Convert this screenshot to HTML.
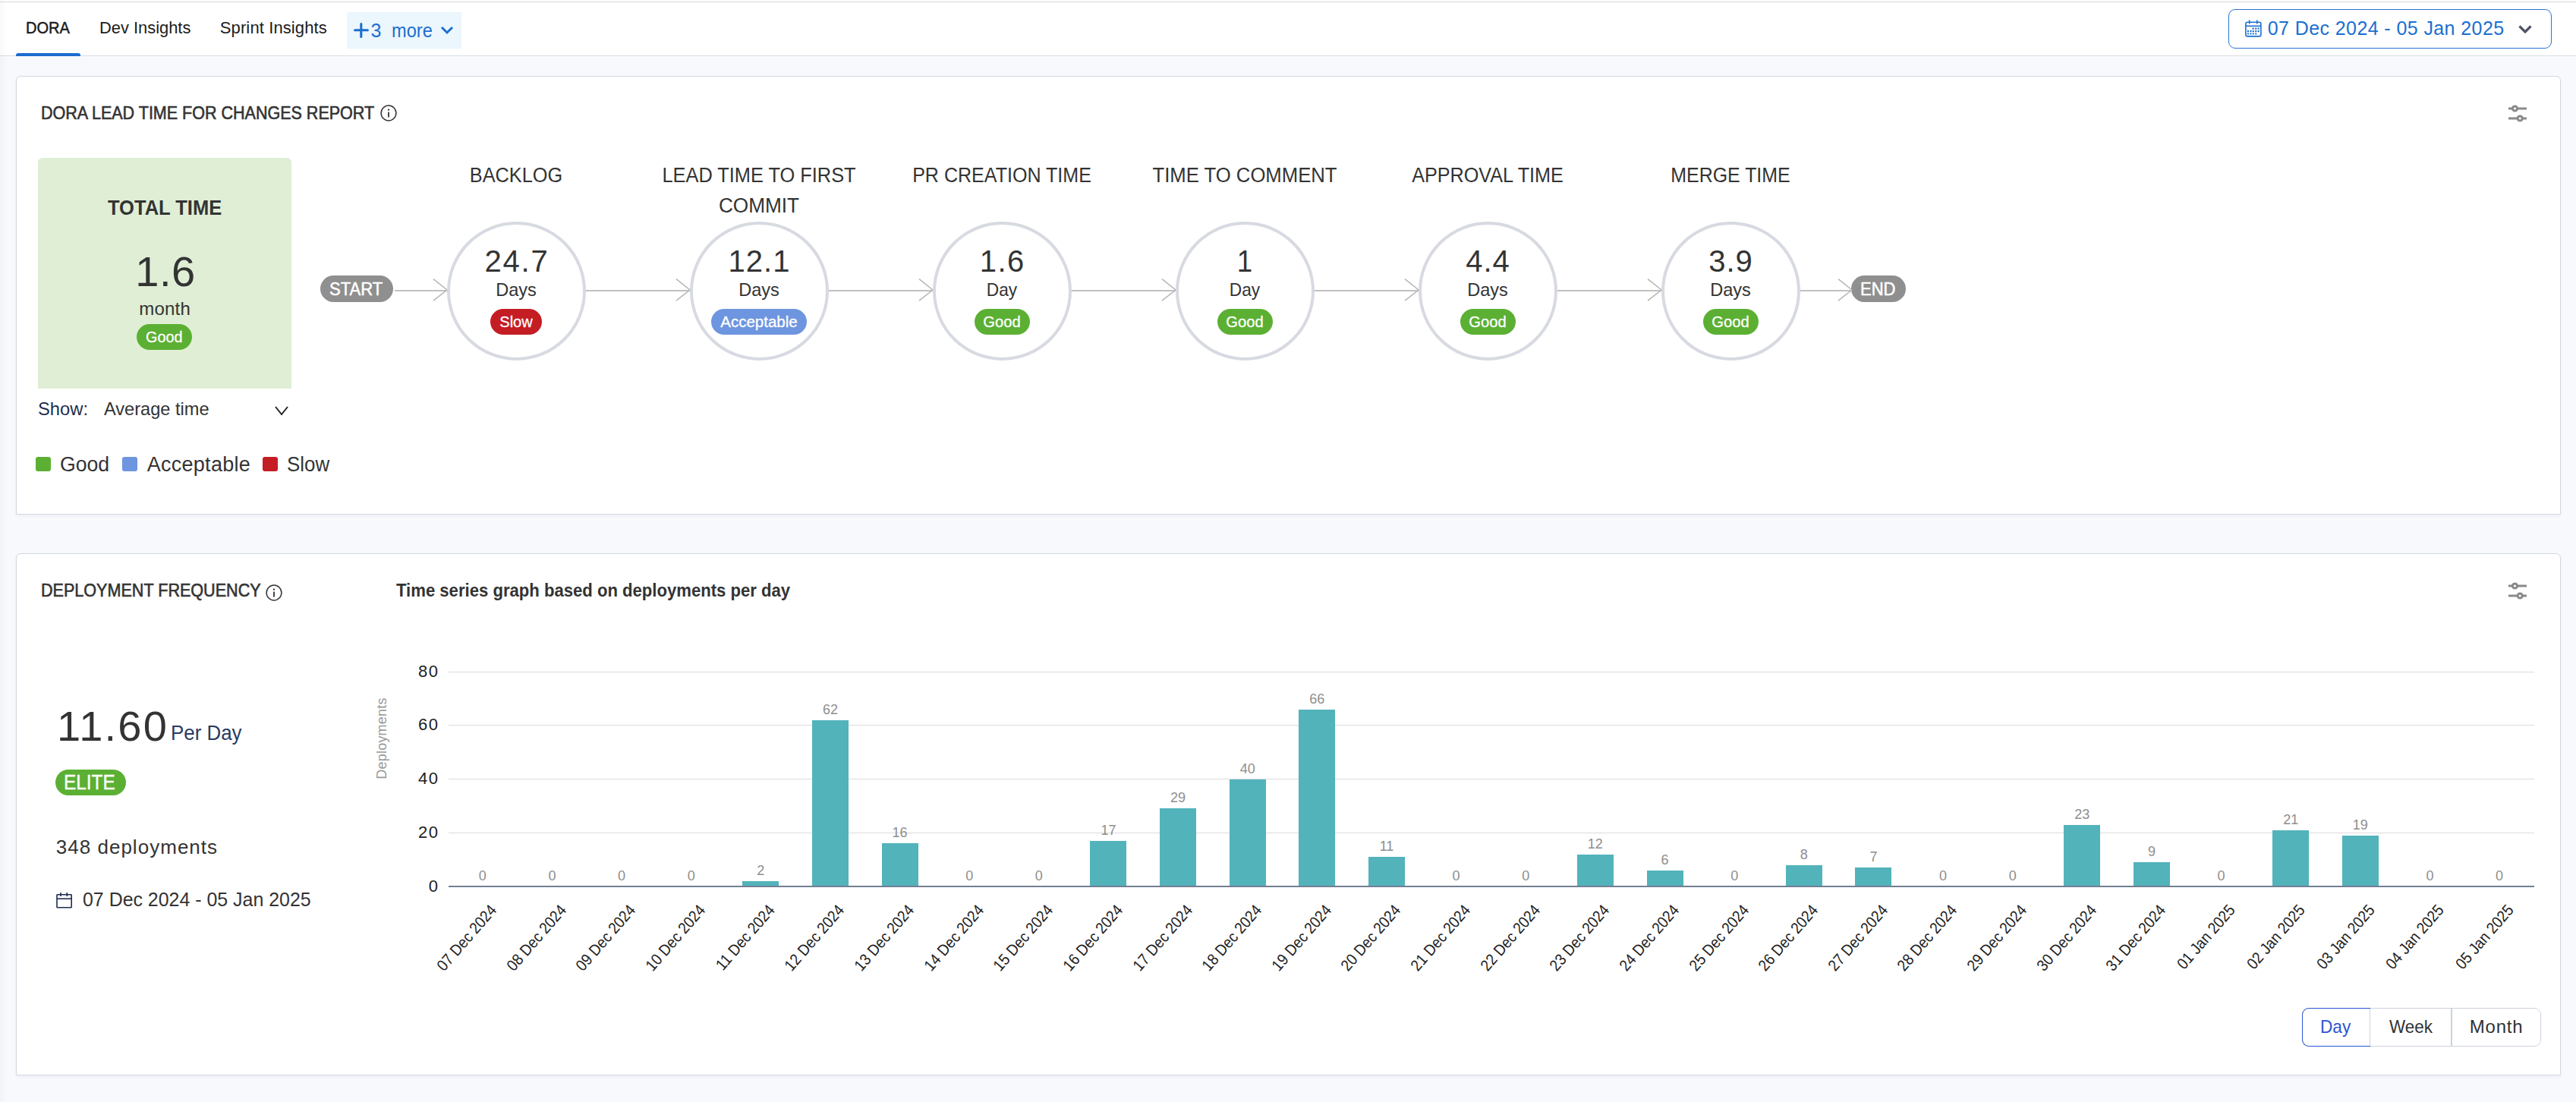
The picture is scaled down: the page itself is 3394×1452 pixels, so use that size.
<!DOCTYPE html>
<html><head><meta charset="utf-8"><style>
html,body{margin:0;padding:0;}
body{width:3394px;height:1452px;position:relative;overflow:hidden;background:#f8f9fd;font-family:"Liberation Sans", sans-serif;}
.t{position:absolute;white-space:nowrap;}
.abs{position:absolute;}
.card{position:absolute;background:#fff;border:1px solid #d3d7df;border-radius:6px 6px 0 0;box-sizing:border-box;box-shadow:0 2px 4px rgba(20,30,60,0.05);}
.circle{position:absolute;width:183px;height:183px;border-radius:50%;border:4px solid #d7dae1;box-sizing:border-box;background:#fff;}
.badge{position:absolute;height:34px;border-radius:17px;}
.pill{position:absolute;height:35px;border-radius:17.5px;background:#8f8f8f;}
</style></head><body>
<div class="abs" style="left:0;top:0;width:3394px;height:73px;background:#fff;"></div>
<div class="abs" style="left:0;top:2px;width:3394px;height:1px;background:#d6d8e1;"></div>
<div class="abs" style="left:0;top:73px;width:3394px;height:1px;background:#d9dce4;"></div>
<div class="abs" style="left:0;top:0;width:10px;height:1452px;background:linear-gradient(90deg,rgba(0,0,0,0.025),rgba(0,0,0,0));"></div>
<div class="abs" style="left:21px;top:70px;width:85px;height:4px;background:#1a6ccf;border-radius:3px 3px 0 0;"></div>
<div class="abs" style="left:457px;top:16px;width:151px;height:48px;background:#ebf6fd;"></div>
<svg class="abs" style="left:466px;top:30px" width="20" height="20" viewBox="0 0 20 20"><path d="M9.8 1.6V18.4M1.6 9.8H18.4" stroke="#1b6fcf" stroke-width="3.1" stroke-linecap="round"/></svg>
<svg class="abs" style="left:580px;top:34px" width="18" height="12" viewBox="0 0 18 12"><path d="M2 2L9 9L16 2" stroke="#1b6fcf" stroke-width="3" fill="none"/></svg>
<div class="abs" style="left:2936px;top:12px;width:426px;height:52px;border:1.5px solid #2a74d3;border-radius:9px;box-sizing:border-box;background:#fff;"></div>
<svg class="abs" style="left:2956px;top:25px" width="26" height="26" viewBox="0 0 26 26">
<rect x="2.9" y="4.2" width="20.0" height="18.7" rx="2.2" fill="none" stroke="#1a6fd0" stroke-width="1.6"/>
<path d="M2.9 9.3H22.9" stroke="#1a6fd0" stroke-width="1.6"/>
<path d="M7.7 1.4V6.6M17.8 1.4V6.6" stroke="#1a6fd0" stroke-width="1.6"/>
<g fill="#1a6fd0"><rect x="11.6" y="11.6" width="2.1" height="2.1" rx="0.5"/><rect x="15.2" y="11.6" width="2.1" height="2.1" rx="0.5"/><rect x="18.6" y="11.6" width="2.1" height="2.1" rx="0.5"/><rect x="4.9" y="15.100000000000001" width="2.1" height="2.1" rx="0.5"/><rect x="8.4" y="15.100000000000001" width="2.1" height="2.1" rx="0.5"/><rect x="11.7" y="15.100000000000001" width="2.1" height="2.1" rx="0.5"/><rect x="15.2" y="15.100000000000001" width="2.1" height="2.1" rx="0.5"/><rect x="18.6" y="15.100000000000001" width="2.1" height="2.1" rx="0.5"/><rect x="4.9" y="18.5" width="2.1" height="2.1" rx="0.5"/><rect x="8.4" y="18.5" width="2.1" height="2.1" rx="0.5"/><rect x="11.7" y="18.5" width="2.1" height="2.1" rx="0.5"/><rect x="15.2" y="18.5" width="2.1" height="2.1" rx="0.5"/></g></svg>
<svg class="abs" style="left:3317px;top:32px" width="20" height="14" viewBox="0 0 20 14"><path d="M2.5 2.5L10 10L17.5 2.5" stroke="#4f5566" stroke-width="3.2" fill="none"/></svg>
<div class="card" style="left:21px;top:100px;width:3353px;height:578px;"></div>
<div class="card" style="left:21px;top:729px;width:3353px;height:688px;"></div>
<svg class="abs" style="left:500.5px;top:138px" width="22" height="22" viewBox="0 0 22 22"><circle cx="11" cy="11" r="9.9" fill="none" stroke="#333" stroke-width="1.5"/><rect x="10.1" y="9.6" width="1.8" height="6.9" fill="#333"/><circle cx="11" cy="6.7" r="1.15" fill="#333"/></svg>
<svg class="abs" style="left:3303px;top:134.9px" width="28" height="30" viewBox="0 0 28 30"><path d="M2 8H26M2 21H26" stroke="#8a8a8a" stroke-width="3"/><circle cx="10.5" cy="8" r="3.1" fill="#fff" stroke="#8a8a8a" stroke-width="3"/><circle cx="17.2" cy="21" r="3.1" fill="#fff" stroke="#8a8a8a" stroke-width="3"/></svg>
<svg class="abs" style="left:349.5px;top:770px" width="22" height="22" viewBox="0 0 22 22"><circle cx="11" cy="11" r="9.9" fill="none" stroke="#333" stroke-width="1.5"/><rect x="10.1" y="9.6" width="1.8" height="6.9" fill="#333"/><circle cx="11" cy="6.7" r="1.15" fill="#333"/></svg>
<svg class="abs" style="left:3303px;top:763.9px" width="28" height="30" viewBox="0 0 28 30"><path d="M2 8H26M2 21H26" stroke="#8a8a8a" stroke-width="3"/><circle cx="10.5" cy="8" r="3.1" fill="#fff" stroke="#8a8a8a" stroke-width="3"/><circle cx="17.2" cy="21" r="3.1" fill="#fff" stroke="#8a8a8a" stroke-width="3"/></svg>
<div class="abs" style="left:50px;top:208px;width:334px;height:304px;background:#dfeed5;border-radius:6px 6px 0 0;"></div>
<div class="badge" style="left:180px;top:427px;width:73px;background:#5bb033;"></div>
<div class="pill" style="left:422px;top:363px;width:96px;"></div>
<div class="pill" style="left:2439px;top:363px;width:72px;"></div>
<svg class="abs" style="left:520px;top:365px" width="71" height="36" viewBox="0 0 71 36"><path d="M0 18H69" stroke="#adadad" stroke-width="1.7"/><path d="M51 2.6L69 17L51 31.2" stroke="#b5b5b5" stroke-width="1.5" fill="none"/></svg>
<div class="circle" style="left:588.5px;top:291.5px;"></div>
<svg class="abs" style="left:772px;top:365px" width="139" height="36" viewBox="0 0 139 36"><path d="M0 18H137" stroke="#adadad" stroke-width="1.7"/><path d="M119 2.6L137 17L119 31.2" stroke="#b5b5b5" stroke-width="1.5" fill="none"/></svg>
<div class="t" style="top:218.00px;font-size:27px;line-height:27px;font-weight:400;color:#333;letter-spacing:0.000px;left:-320.00px;width:2000px;text-align:center;transform:scaleX(0.9370);transform-origin:50% 0;">BACKLOG</div>
<div class="t" style="top:324.00px;font-size:40px;line-height:40px;font-weight:400;color:#333;letter-spacing:1.800px;left:-319.10px;width:2000px;text-align:center;">24.7</div>
<div class="t" style="top:370.00px;font-size:24px;line-height:24px;font-weight:400;color:#333;letter-spacing:0.000px;left:-320.00px;width:2000px;text-align:center;transform:scaleX(0.9808);transform-origin:50% 0;">Days</div>
<div class="badge" style="left:646.0px;top:407px;width:68px;background:#c41d24;"></div>
<div class="t" style="top:413.00px;font-size:21px;line-height:21px;font-weight:400;color:#fff;letter-spacing:0.000px;-webkit-text-stroke:0.3px #fff;left:-320.00px;width:2000px;text-align:center;transform:scaleX(0.9511);transform-origin:50% 0;">Slow</div>
<div class="circle" style="left:908.5px;top:291.5px;"></div>
<svg class="abs" style="left:1092px;top:365px" width="139" height="36" viewBox="0 0 139 36"><path d="M0 18H137" stroke="#adadad" stroke-width="1.7"/><path d="M119 2.6L137 17L119 31.2" stroke="#b5b5b5" stroke-width="1.5" fill="none"/></svg>
<div class="t" style="top:218.00px;font-size:27px;line-height:27px;font-weight:400;color:#333;letter-spacing:0.000px;left:0.00px;width:2000px;text-align:center;transform:scaleX(0.9394);transform-origin:50% 0;">LEAD TIME TO FIRST</div>
<div class="t" style="top:258.00px;font-size:27px;line-height:27px;font-weight:400;color:#333;letter-spacing:0.000px;left:0.00px;width:2000px;text-align:center;transform:scaleX(0.9694);transform-origin:50% 0;">COMMIT</div>
<div class="t" style="top:324.00px;font-size:40px;line-height:40px;font-weight:400;color:#333;letter-spacing:1.067px;left:0.53px;width:2000px;text-align:center;">12.1</div>
<div class="t" style="top:370.00px;font-size:24px;line-height:24px;font-weight:400;color:#333;letter-spacing:0.000px;left:0.00px;width:2000px;text-align:center;transform:scaleX(0.9808);transform-origin:50% 0;">Days</div>
<div class="badge" style="left:937.0px;top:407px;width:126px;background:#6e95df;"></div>
<div class="t" style="top:413.00px;font-size:21px;line-height:21px;font-weight:400;color:#fff;letter-spacing:0.000px;-webkit-text-stroke:0.3px #fff;left:0.00px;width:2000px;text-align:center;transform:scaleX(0.9769);transform-origin:50% 0;">Acceptable</div>
<div class="circle" style="left:1228.5px;top:291.5px;"></div>
<svg class="abs" style="left:1412px;top:365px" width="139" height="36" viewBox="0 0 139 36"><path d="M0 18H137" stroke="#adadad" stroke-width="1.7"/><path d="M119 2.6L137 17L119 31.2" stroke="#b5b5b5" stroke-width="1.5" fill="none"/></svg>
<div class="t" style="top:218.00px;font-size:27px;line-height:27px;font-weight:400;color:#333;letter-spacing:0.000px;left:320.00px;width:2000px;text-align:center;transform:scaleX(0.9279);transform-origin:50% 0;">PR CREATION TIME</div>
<div class="t" style="top:324.00px;font-size:40px;line-height:40px;font-weight:400;color:#333;letter-spacing:1.400px;left:320.70px;width:2000px;text-align:center;">1.6</div>
<div class="t" style="top:370.00px;font-size:24px;line-height:24px;font-weight:400;color:#333;letter-spacing:0.000px;left:320.00px;width:2000px;text-align:center;transform:scaleX(0.9439);transform-origin:50% 0;">Day</div>
<div class="badge" style="left:1283.5px;top:407px;width:73px;background:#5bb033;"></div>
<div class="t" style="top:413.00px;font-size:21px;line-height:21px;font-weight:400;color:#fff;letter-spacing:0.000px;-webkit-text-stroke:0.3px #fff;left:320.00px;width:2000px;text-align:center;transform:scaleX(0.9600);transform-origin:50% 0;">Good</div>
<div class="circle" style="left:1548.5px;top:291.5px;"></div>
<svg class="abs" style="left:1732px;top:365px" width="139" height="36" viewBox="0 0 139 36"><path d="M0 18H137" stroke="#adadad" stroke-width="1.7"/><path d="M119 2.6L137 17L119 31.2" stroke="#b5b5b5" stroke-width="1.5" fill="none"/></svg>
<div class="t" style="top:218.00px;font-size:27px;line-height:27px;font-weight:400;color:#333;letter-spacing:0.000px;left:640.00px;width:2000px;text-align:center;transform:scaleX(0.9510);transform-origin:50% 0;">TIME TO COMMENT</div>
<div class="t" style="top:324.00px;font-size:40px;line-height:40px;font-weight:400;color:#333;letter-spacing:0.000px;left:640.00px;width:2000px;text-align:center;transform:scaleX(0.9167);transform-origin:50% 0;">1</div>
<div class="t" style="top:370.00px;font-size:24px;line-height:24px;font-weight:400;color:#333;letter-spacing:0.000px;left:640.00px;width:2000px;text-align:center;transform:scaleX(0.9439);transform-origin:50% 0;">Day</div>
<div class="badge" style="left:1603.5px;top:407px;width:73px;background:#5bb033;"></div>
<div class="t" style="top:413.00px;font-size:21px;line-height:21px;font-weight:400;color:#fff;letter-spacing:0.000px;-webkit-text-stroke:0.3px #fff;left:640.00px;width:2000px;text-align:center;transform:scaleX(0.9600);transform-origin:50% 0;">Good</div>
<div class="circle" style="left:1868.5px;top:291.5px;"></div>
<svg class="abs" style="left:2052px;top:365px" width="139" height="36" viewBox="0 0 139 36"><path d="M0 18H137" stroke="#adadad" stroke-width="1.7"/><path d="M119 2.6L137 17L119 31.2" stroke="#b5b5b5" stroke-width="1.5" fill="none"/></svg>
<div class="t" style="top:218.00px;font-size:27px;line-height:27px;font-weight:400;color:#333;letter-spacing:0.000px;left:960.00px;width:2000px;text-align:center;transform:scaleX(0.9324);transform-origin:50% 0;">APPROVAL TIME</div>
<div class="t" style="top:324.00px;font-size:40px;line-height:40px;font-weight:400;color:#333;letter-spacing:0.950px;left:960.48px;width:2000px;text-align:center;">4.4</div>
<div class="t" style="top:370.00px;font-size:24px;line-height:24px;font-weight:400;color:#333;letter-spacing:0.000px;left:960.00px;width:2000px;text-align:center;transform:scaleX(0.9808);transform-origin:50% 0;">Days</div>
<div class="badge" style="left:1923.5px;top:407px;width:73px;background:#5bb033;"></div>
<div class="t" style="top:413.00px;font-size:21px;line-height:21px;font-weight:400;color:#fff;letter-spacing:0.000px;-webkit-text-stroke:0.3px #fff;left:960.00px;width:2000px;text-align:center;transform:scaleX(0.9600);transform-origin:50% 0;">Good</div>
<div class="circle" style="left:2188.5px;top:291.5px;"></div>
<div class="t" style="top:218.00px;font-size:27px;line-height:27px;font-weight:400;color:#333;letter-spacing:0.000px;left:1280.00px;width:2000px;text-align:center;transform:scaleX(0.9226);transform-origin:50% 0;">MERGE TIME</div>
<div class="t" style="top:324.00px;font-size:40px;line-height:40px;font-weight:400;color:#333;letter-spacing:1.000px;left:1280.50px;width:2000px;text-align:center;">3.9</div>
<div class="t" style="top:370.00px;font-size:24px;line-height:24px;font-weight:400;color:#333;letter-spacing:0.000px;left:1280.00px;width:2000px;text-align:center;transform:scaleX(0.9808);transform-origin:50% 0;">Days</div>
<div class="badge" style="left:2243.5px;top:407px;width:73px;background:#5bb033;"></div>
<div class="t" style="top:413.00px;font-size:21px;line-height:21px;font-weight:400;color:#fff;letter-spacing:0.000px;-webkit-text-stroke:0.3px #fff;left:1280.00px;width:2000px;text-align:center;transform:scaleX(0.9600);transform-origin:50% 0;">Good</div>
<svg class="abs" style="left:2372px;top:365px" width="70" height="36" viewBox="0 0 70 36"><path d="M0 18H68" stroke="#adadad" stroke-width="1.7"/><path d="M50 2.6L68 17L50 31.2" stroke="#b5b5b5" stroke-width="1.5" fill="none"/></svg>
<svg class="abs" style="left:361px;top:533px" width="20" height="16" viewBox="0 0 20 16"><path d="M2 3L10 13L18 3" stroke="#222" stroke-width="2" fill="none"/></svg>
<div class="abs" style="left:47px;top:602px;width:20px;height:19px;border-radius:3px;background:#5bb033;"></div>
<div class="abs" style="left:161px;top:602px;width:20px;height:19px;border-radius:3px;background:#6e95df;"></div>
<div class="abs" style="left:346px;top:602px;width:20px;height:19px;border-radius:3px;background:#c41d24;"></div>
<div class="badge" style="left:73px;top:1014px;width:93px;background:#5bb033;"></div>
<svg class="abs" style="left:70px;top:1172px" width="28" height="28" viewBox="0 0 28 28">
<rect x="5" y="6.8" width="19.2" height="17.0" rx="0.6" fill="none" stroke="#1f2e4f" stroke-width="1.6"/>
<path d="M5 12.2H24.2" stroke="#1f2e4f" stroke-width="1.6"/>
<path d="M10.05 4V9M18.3 4V9" stroke="#1f2e4f" stroke-width="1.6"/></svg>
<div class="abs" style="left:3033px;top:1328px;width:315px;height:51px;border:1.5px solid #cdd2db;border-radius:9px;box-sizing:border-box;"></div>
<div class="abs" style="left:3229px;top:1329px;width:1.5px;height:49px;background:#cdd2db;"></div>
<div class="abs" style="left:3122px;top:1329px;width:1px;height:49px;background:#cdd2db;"></div>
<div class="abs" style="left:3033px;top:1328px;width:90px;height:51px;border:1.5px solid #2a56d4;border-right:none;border-radius:9px 0 0 9px;box-sizing:border-box;"></div>
<div class="abs" style="left:591px;top:1097px;width:2747.90px;height:1px;background:#dcdcdc;"></div>
<div class="abs" style="left:591px;top:1026px;width:2747.90px;height:1px;background:#dcdcdc;"></div>
<div class="abs" style="left:591px;top:955px;width:2747.90px;height:1px;background:#dcdcdc;"></div>
<div class="abs" style="left:591px;top:885px;width:2747.90px;height:1px;background:#dcdcdc;"></div>
<div class="t" style="top:1156.50px;font-size:22px;line-height:22px;font-weight:400;color:#222;letter-spacing:1.500px;right:2815.50px;text-align:right;">0</div>
<div class="t" style="top:1085.75px;font-size:22px;line-height:22px;font-weight:400;color:#222;letter-spacing:1.500px;right:2815.50px;text-align:right;">20</div>
<div class="t" style="top:1015.00px;font-size:22px;line-height:22px;font-weight:400;color:#222;letter-spacing:1.500px;right:2815.50px;text-align:right;">40</div>
<div class="t" style="top:944.25px;font-size:22px;line-height:22px;font-weight:400;color:#222;letter-spacing:1.500px;right:2815.50px;text-align:right;">60</div>
<div class="t" style="top:873.50px;font-size:22px;line-height:22px;font-weight:400;color:#222;letter-spacing:1.500px;right:2815.50px;text-align:right;">80</div>
<div class="t" style="left:443px;top:962px;width:120px;height:22px;font-size:18px;line-height:22px;text-align:center;color:#999;transform:rotate(-90deg);letter-spacing:0.2px;">Deployments</div>
<div class="t" style="top:1145.00px;font-size:18px;line-height:18px;font-weight:400;color:#8e8e8e;letter-spacing:0.000px;left:-364.18px;width:2000px;text-align:center;">0</div>
<div class="t" style="top:1145.00px;font-size:18px;line-height:18px;font-weight:400;color:#8e8e8e;letter-spacing:0.000px;left:-272.56px;width:2000px;text-align:center;">0</div>
<div class="t" style="top:1145.00px;font-size:18px;line-height:18px;font-weight:400;color:#8e8e8e;letter-spacing:0.000px;left:-180.92px;width:2000px;text-align:center;">0</div>
<div class="t" style="top:1145.00px;font-size:18px;line-height:18px;font-weight:400;color:#8e8e8e;letter-spacing:0.000px;left:-89.30px;width:2000px;text-align:center;">0</div>
<div class="abs" style="left:978.34px;top:1160.92px;width:48px;height:7.08px;background:#52b3bb;"></div>
<div class="t" style="top:1137.92px;font-size:18px;line-height:18px;font-weight:400;color:#8e8e8e;letter-spacing:0.000px;left:2.34px;width:2000px;text-align:center;">2</div>
<div class="abs" style="left:1069.96px;top:948.67px;width:48px;height:219.33px;background:#52b3bb;"></div>
<div class="t" style="top:925.67px;font-size:18px;line-height:18px;font-weight:400;color:#8e8e8e;letter-spacing:0.000px;left:93.96px;width:2000px;text-align:center;">62</div>
<div class="abs" style="left:1161.60px;top:1111.40px;width:48px;height:56.60px;background:#52b3bb;"></div>
<div class="t" style="top:1088.40px;font-size:18px;line-height:18px;font-weight:400;color:#8e8e8e;letter-spacing:0.000px;left:185.60px;width:2000px;text-align:center;">16</div>
<div class="t" style="top:1145.00px;font-size:18px;line-height:18px;font-weight:400;color:#8e8e8e;letter-spacing:0.000px;left:277.22px;width:2000px;text-align:center;">0</div>
<div class="t" style="top:1145.00px;font-size:18px;line-height:18px;font-weight:400;color:#8e8e8e;letter-spacing:0.000px;left:368.86px;width:2000px;text-align:center;">0</div>
<div class="abs" style="left:1436.48px;top:1107.86px;width:48px;height:60.14px;background:#52b3bb;"></div>
<div class="t" style="top:1084.86px;font-size:18px;line-height:18px;font-weight:400;color:#8e8e8e;letter-spacing:0.000px;left:460.48px;width:2000px;text-align:center;">17</div>
<div class="abs" style="left:1528.12px;top:1065.41px;width:48px;height:102.59px;background:#52b3bb;"></div>
<div class="t" style="top:1042.41px;font-size:18px;line-height:18px;font-weight:400;color:#8e8e8e;letter-spacing:0.000px;left:552.12px;width:2000px;text-align:center;">29</div>
<div class="abs" style="left:1619.74px;top:1026.50px;width:48px;height:141.50px;background:#52b3bb;"></div>
<div class="t" style="top:1003.50px;font-size:18px;line-height:18px;font-weight:400;color:#8e8e8e;letter-spacing:0.000px;left:643.74px;width:2000px;text-align:center;">40</div>
<div class="abs" style="left:1711.38px;top:934.52px;width:48px;height:233.47px;background:#52b3bb;"></div>
<div class="t" style="top:911.52px;font-size:18px;line-height:18px;font-weight:400;color:#8e8e8e;letter-spacing:0.000px;left:735.38px;width:2000px;text-align:center;">66</div>
<div class="abs" style="left:1803.00px;top:1129.09px;width:48px;height:38.91px;background:#52b3bb;"></div>
<div class="t" style="top:1106.09px;font-size:18px;line-height:18px;font-weight:400;color:#8e8e8e;letter-spacing:0.000px;left:827.00px;width:2000px;text-align:center;">11</div>
<div class="t" style="top:1145.00px;font-size:18px;line-height:18px;font-weight:400;color:#8e8e8e;letter-spacing:0.000px;left:918.63px;width:2000px;text-align:center;">0</div>
<div class="t" style="top:1145.00px;font-size:18px;line-height:18px;font-weight:400;color:#8e8e8e;letter-spacing:0.000px;left:1010.26px;width:2000px;text-align:center;">0</div>
<div class="abs" style="left:2077.89px;top:1125.55px;width:48px;height:42.45px;background:#52b3bb;"></div>
<div class="t" style="top:1102.55px;font-size:18px;line-height:18px;font-weight:400;color:#8e8e8e;letter-spacing:0.000px;left:1101.89px;width:2000px;text-align:center;">12</div>
<div class="abs" style="left:2169.52px;top:1146.78px;width:48px;height:21.23px;background:#52b3bb;"></div>
<div class="t" style="top:1123.78px;font-size:18px;line-height:18px;font-weight:400;color:#8e8e8e;letter-spacing:0.000px;left:1193.52px;width:2000px;text-align:center;">6</div>
<div class="t" style="top:1145.00px;font-size:18px;line-height:18px;font-weight:400;color:#8e8e8e;letter-spacing:0.000px;left:1285.15px;width:2000px;text-align:center;">0</div>
<div class="abs" style="left:2352.78px;top:1139.70px;width:48px;height:28.30px;background:#52b3bb;"></div>
<div class="t" style="top:1116.70px;font-size:18px;line-height:18px;font-weight:400;color:#8e8e8e;letter-spacing:0.000px;left:1376.78px;width:2000px;text-align:center;">8</div>
<div class="abs" style="left:2444.41px;top:1143.24px;width:48px;height:24.76px;background:#52b3bb;"></div>
<div class="t" style="top:1120.24px;font-size:18px;line-height:18px;font-weight:400;color:#8e8e8e;letter-spacing:0.000px;left:1468.41px;width:2000px;text-align:center;">7</div>
<div class="t" style="top:1145.00px;font-size:18px;line-height:18px;font-weight:400;color:#8e8e8e;letter-spacing:0.000px;left:1560.05px;width:2000px;text-align:center;">0</div>
<div class="t" style="top:1145.00px;font-size:18px;line-height:18px;font-weight:400;color:#8e8e8e;letter-spacing:0.000px;left:1651.67px;width:2000px;text-align:center;">0</div>
<div class="abs" style="left:2719.30px;top:1086.64px;width:48px;height:81.36px;background:#52b3bb;"></div>
<div class="t" style="top:1063.64px;font-size:18px;line-height:18px;font-weight:400;color:#8e8e8e;letter-spacing:0.000px;left:1743.30px;width:2000px;text-align:center;">23</div>
<div class="abs" style="left:2810.93px;top:1136.16px;width:48px;height:31.84px;background:#52b3bb;"></div>
<div class="t" style="top:1113.16px;font-size:18px;line-height:18px;font-weight:400;color:#8e8e8e;letter-spacing:0.000px;left:1834.93px;width:2000px;text-align:center;">9</div>
<div class="t" style="top:1145.00px;font-size:18px;line-height:18px;font-weight:400;color:#8e8e8e;letter-spacing:0.000px;left:1926.57px;width:2000px;text-align:center;">0</div>
<div class="abs" style="left:2994.19px;top:1093.71px;width:48px;height:74.29px;background:#52b3bb;"></div>
<div class="t" style="top:1070.71px;font-size:18px;line-height:18px;font-weight:400;color:#8e8e8e;letter-spacing:0.000px;left:2018.19px;width:2000px;text-align:center;">21</div>
<div class="abs" style="left:3085.82px;top:1100.79px;width:48px;height:67.21px;background:#52b3bb;"></div>
<div class="t" style="top:1077.79px;font-size:18px;line-height:18px;font-weight:400;color:#8e8e8e;letter-spacing:0.000px;left:2109.82px;width:2000px;text-align:center;">19</div>
<div class="t" style="top:1145.00px;font-size:18px;line-height:18px;font-weight:400;color:#8e8e8e;letter-spacing:0.000px;left:2201.45px;width:2000px;text-align:center;">0</div>
<div class="t" style="top:1145.00px;font-size:18px;line-height:18px;font-weight:400;color:#8e8e8e;letter-spacing:0.000px;left:2293.09px;width:2000px;text-align:center;">0</div>
<div class="abs" style="left:591px;top:1167.0px;width:2747.90px;height:2px;background:#737f93;"></div>
<div class="t" style="right:2738.68px;top:1182px;font-size:21px;line-height:22px;color:#222;transform-origin:100% 80%;transform:rotate(-49deg) scaleX(0.9);letter-spacing:0px;">07 Dec 2024</div>
<div class="t" style="right:2647.06px;top:1182px;font-size:21px;line-height:22px;color:#222;transform-origin:100% 80%;transform:rotate(-49deg) scaleX(0.9);letter-spacing:0px;">08 Dec 2024</div>
<div class="t" style="right:2555.43px;top:1182px;font-size:21px;line-height:22px;color:#222;transform-origin:100% 80%;transform:rotate(-49deg) scaleX(0.9);letter-spacing:0px;">09 Dec 2024</div>
<div class="t" style="right:2463.80px;top:1182px;font-size:21px;line-height:22px;color:#222;transform-origin:100% 80%;transform:rotate(-49deg) scaleX(0.9);letter-spacing:0px;">10 Dec 2024</div>
<div class="t" style="right:2372.16px;top:1182px;font-size:21px;line-height:22px;color:#222;transform-origin:100% 80%;transform:rotate(-49deg) scaleX(0.9);letter-spacing:0px;">11 Dec 2024</div>
<div class="t" style="right:2280.53px;top:1182px;font-size:21px;line-height:22px;color:#222;transform-origin:100% 80%;transform:rotate(-49deg) scaleX(0.9);letter-spacing:0px;">12 Dec 2024</div>
<div class="t" style="right:2188.90px;top:1182px;font-size:21px;line-height:22px;color:#222;transform-origin:100% 80%;transform:rotate(-49deg) scaleX(0.9);letter-spacing:0px;">13 Dec 2024</div>
<div class="t" style="right:2097.28px;top:1182px;font-size:21px;line-height:22px;color:#222;transform-origin:100% 80%;transform:rotate(-49deg) scaleX(0.9);letter-spacing:0px;">14 Dec 2024</div>
<div class="t" style="right:2005.64px;top:1182px;font-size:21px;line-height:22px;color:#222;transform-origin:100% 80%;transform:rotate(-49deg) scaleX(0.9);letter-spacing:0px;">15 Dec 2024</div>
<div class="t" style="right:1914.02px;top:1182px;font-size:21px;line-height:22px;color:#222;transform-origin:100% 80%;transform:rotate(-49deg) scaleX(0.9);letter-spacing:0px;">16 Dec 2024</div>
<div class="t" style="right:1822.38px;top:1182px;font-size:21px;line-height:22px;color:#222;transform-origin:100% 80%;transform:rotate(-49deg) scaleX(0.9);letter-spacing:0px;">17 Dec 2024</div>
<div class="t" style="right:1730.76px;top:1182px;font-size:21px;line-height:22px;color:#222;transform-origin:100% 80%;transform:rotate(-49deg) scaleX(0.9);letter-spacing:0px;">18 Dec 2024</div>
<div class="t" style="right:1639.12px;top:1182px;font-size:21px;line-height:22px;color:#222;transform-origin:100% 80%;transform:rotate(-49deg) scaleX(0.9);letter-spacing:0px;">19 Dec 2024</div>
<div class="t" style="right:1547.50px;top:1182px;font-size:21px;line-height:22px;color:#222;transform-origin:100% 80%;transform:rotate(-49deg) scaleX(0.9);letter-spacing:0px;">20 Dec 2024</div>
<div class="t" style="right:1455.87px;top:1182px;font-size:21px;line-height:22px;color:#222;transform-origin:100% 80%;transform:rotate(-49deg) scaleX(0.9);letter-spacing:0px;">21 Dec 2024</div>
<div class="t" style="right:1364.24px;top:1182px;font-size:21px;line-height:22px;color:#222;transform-origin:100% 80%;transform:rotate(-49deg) scaleX(0.9);letter-spacing:0px;">22 Dec 2024</div>
<div class="t" style="right:1272.61px;top:1182px;font-size:21px;line-height:22px;color:#222;transform-origin:100% 80%;transform:rotate(-49deg) scaleX(0.9);letter-spacing:0px;">23 Dec 2024</div>
<div class="t" style="right:1180.98px;top:1182px;font-size:21px;line-height:22px;color:#222;transform-origin:100% 80%;transform:rotate(-49deg) scaleX(0.9);letter-spacing:0px;">24 Dec 2024</div>
<div class="t" style="right:1089.35px;top:1182px;font-size:21px;line-height:22px;color:#222;transform-origin:100% 80%;transform:rotate(-49deg) scaleX(0.9);letter-spacing:0px;">25 Dec 2024</div>
<div class="t" style="right:997.72px;top:1182px;font-size:21px;line-height:22px;color:#222;transform-origin:100% 80%;transform:rotate(-49deg) scaleX(0.9);letter-spacing:0px;">26 Dec 2024</div>
<div class="t" style="right:906.09px;top:1182px;font-size:21px;line-height:22px;color:#222;transform-origin:100% 80%;transform:rotate(-49deg) scaleX(0.9);letter-spacing:0px;">27 Dec 2024</div>
<div class="t" style="right:814.45px;top:1182px;font-size:21px;line-height:22px;color:#222;transform-origin:100% 80%;transform:rotate(-49deg) scaleX(0.9);letter-spacing:0px;">28 Dec 2024</div>
<div class="t" style="right:722.83px;top:1182px;font-size:21px;line-height:22px;color:#222;transform-origin:100% 80%;transform:rotate(-49deg) scaleX(0.9);letter-spacing:0px;">29 Dec 2024</div>
<div class="t" style="right:631.20px;top:1182px;font-size:21px;line-height:22px;color:#222;transform-origin:100% 80%;transform:rotate(-49deg) scaleX(0.9);letter-spacing:0px;">30 Dec 2024</div>
<div class="t" style="right:539.57px;top:1182px;font-size:21px;line-height:22px;color:#222;transform-origin:100% 80%;transform:rotate(-49deg) scaleX(0.9);letter-spacing:0px;">31 Dec 2024</div>
<div class="t" style="right:447.93px;top:1182px;font-size:21px;line-height:22px;color:#222;transform-origin:100% 80%;transform:rotate(-49deg) scaleX(0.9);letter-spacing:0px;">01 Jan 2025</div>
<div class="t" style="right:356.31px;top:1182px;font-size:21px;line-height:22px;color:#222;transform-origin:100% 80%;transform:rotate(-49deg) scaleX(0.9);letter-spacing:0px;">02 Jan 2025</div>
<div class="t" style="right:264.68px;top:1182px;font-size:21px;line-height:22px;color:#222;transform-origin:100% 80%;transform:rotate(-49deg) scaleX(0.9);letter-spacing:0px;">03 Jan 2025</div>
<div class="t" style="right:173.05px;top:1182px;font-size:21px;line-height:22px;color:#222;transform-origin:100% 80%;transform:rotate(-49deg) scaleX(0.9);letter-spacing:0px;">04 Jan 2025</div>
<div class="t" style="right:81.41px;top:1182px;font-size:21px;line-height:22px;color:#222;transform-origin:100% 80%;transform:rotate(-49deg) scaleX(0.9);letter-spacing:0px;">05 Jan 2025</div>
<div class="t" style="top:26.00px;font-size:22px;line-height:22px;font-weight:400;color:#1c1c1c;letter-spacing:0.000px;-webkit-text-stroke:0.5px #1c1c1c;left:33.69px;transform:scaleX(0.9111);transform-origin:0 0;">DORA</div>
<div class="t" style="top:26.00px;font-size:22px;line-height:22px;font-weight:400;color:#1c1c1c;letter-spacing:0.000px;left:130.71px;transform:scaleX(0.9942);transform-origin:0 0;">Dev Insights</div>
<div class="t" style="top:26.00px;font-size:22px;line-height:22px;font-weight:400;color:#1c1c1c;letter-spacing:0.114px;left:289.80px;">Sprint Insights</div>
<div class="t" style="top:27.70px;font-size:25px;line-height:25px;font-weight:400;color:#1b6fcf;letter-spacing:0.100px;left:488.60px;">3</div>
<div class="t" style="top:27.70px;font-size:25px;line-height:25px;font-weight:400;color:#1b6fcf;letter-spacing:0.000px;left:515.86px;transform:scaleX(0.9436);transform-origin:0 0;">more</div>
<div class="t" style="top:25.00px;font-size:25px;line-height:25px;font-weight:400;color:#1a6fd0;letter-spacing:0.404px;left:2987.80px;">07 Dec 2024 - 05 Jan 2025</div>
<div class="t" style="top:138.00px;font-size:23px;line-height:23px;font-weight:400;color:#333333;letter-spacing:0.000px;-webkit-text-stroke:0.6px #333333;left:53.76px;transform:scaleX(0.9354);transform-origin:0 0;">DORA LEAD TIME FOR CHANGES REPORT</div>
<div class="t" style="top:261.00px;font-size:27px;line-height:27px;font-weight:700;color:#333333;letter-spacing:0.000px;left:142.00px;transform:scaleX(0.9443);transform-origin:0 0;">TOTAL TIME</div>
<div class="t" style="top:329.70px;font-size:56px;line-height:56px;font-weight:400;color:#333333;letter-spacing:0.500px;left:178.30px;">1.6</div>
<div class="t" style="top:395.00px;font-size:24px;line-height:24px;font-weight:400;color:#333333;letter-spacing:0.225px;left:183.20px;">month</div>
<div class="t" style="top:433.00px;font-size:21px;line-height:21px;font-weight:400;color:#ffffff;letter-spacing:0.000px;-webkit-text-stroke:0.3px #ffffff;left:192.06px;transform:scaleX(0.9440);transform-origin:0 0;">Good</div>
<div class="t" style="top:369.70px;font-size:23px;line-height:23px;font-weight:400;color:#ffffff;letter-spacing:0.000px;-webkit-text-stroke:0.5px #ffffff;left:434.44px;transform:scaleX(0.9569);transform-origin:0 0;">START</div>
<div class="t" style="top:369.70px;font-size:23px;line-height:23px;font-weight:400;color:#ffffff;letter-spacing:0.000px;-webkit-text-stroke:0.5px #ffffff;left:2451.04px;transform:scaleX(0.9574);transform-origin:0 0;">END</div>
<div class="t" style="top:527.00px;font-size:24px;line-height:24px;font-weight:400;color:#1f2e4d;letter-spacing:0.000px;left:49.71px;transform:scaleX(0.9891);transform-origin:0 0;">Show:</div>
<div class="t" style="top:527.00px;font-size:24px;line-height:24px;font-weight:400;color:#333333;letter-spacing:0.000px;left:137.20px;transform:scaleX(0.9829);transform-origin:0 0;">Average time</div>
<div class="t" style="top:598.50px;font-size:27px;line-height:27px;font-weight:400;color:#333333;letter-spacing:0.000px;left:79.31px;transform:scaleX(0.9859);transform-origin:0 0;">Good</div>
<div class="t" style="top:598.50px;font-size:27px;line-height:27px;font-weight:400;color:#333333;letter-spacing:0.256px;left:193.80px;">Acceptable</div>
<div class="t" style="top:598.50px;font-size:27px;line-height:27px;font-weight:400;color:#333333;letter-spacing:0.000px;left:377.64px;transform:scaleX(0.9603);transform-origin:0 0;">Slow</div>
<div class="t" style="top:767.00px;font-size:23px;line-height:23px;font-weight:400;color:#333333;letter-spacing:0.000px;-webkit-text-stroke:0.6px #333333;left:53.76px;transform:scaleX(0.9377);transform-origin:0 0;">DEPLOYMENT FREQUENCY</div>
<div class="t" style="top:766.40px;font-size:24px;line-height:24px;font-weight:700;color:#333333;letter-spacing:0.000px;left:522.20px;transform:scaleX(0.9209);transform-origin:0 0;">Time series graph based on deployments per day</div>
<div class="t" style="top:929.00px;font-size:56px;line-height:56px;font-weight:400;color:#333333;letter-spacing:2.200px;left:75.00px;">11.60</div>
<div class="t" style="top:951.50px;font-size:28px;line-height:28px;font-weight:400;color:#283b62;letter-spacing:0.000px;left:225.15px;transform:scaleX(0.9242);transform-origin:0 0;">Per Day</div>
<div class="t" style="top:1018.00px;font-size:27px;line-height:27px;font-weight:400;color:#ffffff;letter-spacing:0.000px;-webkit-text-stroke:0.4px #ffffff;left:84.49px;transform:scaleX(0.9027);transform-origin:0 0;">ELITE</div>
<div class="t" style="top:1103.00px;font-size:26px;line-height:26px;font-weight:400;color:#333333;letter-spacing:1.029px;left:73.70px;">348 deployments</div>
<div class="t" style="top:1173.00px;font-size:25px;line-height:25px;font-weight:400;color:#333333;letter-spacing:0.000px;left:108.50px;transform:scaleX(0.9967);transform-origin:0 0;">07 Dec 2024 - 05 Jan 2025</div>
<div class="t" style="top:1341.20px;font-size:24px;line-height:24px;font-weight:400;color:#2d55d0;letter-spacing:0.000px;left:3057.01px;transform:scaleX(0.9439);transform-origin:0 0;">Day</div>
<div class="t" style="top:1341.20px;font-size:24px;line-height:24px;font-weight:400;color:#333333;letter-spacing:0.000px;left:3148.00px;transform:scaleX(0.9344);transform-origin:0 0;">Week</div>
<div class="t" style="top:1341.20px;font-size:24px;line-height:24px;font-weight:400;color:#333333;letter-spacing:0.825px;left:3253.70px;">Month</div>
</body></html>
